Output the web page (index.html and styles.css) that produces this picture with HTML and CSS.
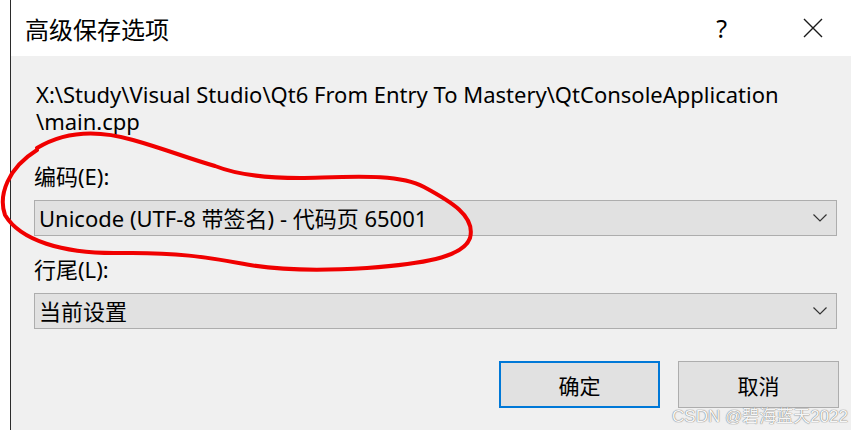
FILE: index.html
```html
<!DOCTYPE html>
<html lang="zh-CN">
<head>
    <meta charset="UTF-8">
    <meta name="viewport" content="width=device-width, initial-scale=1.0">
    <title>高级保存选项</title>
    <link rel="stylesheet" href="styles.css">
</head>
<body>
    <div class="screen">
        <div class="dialog">
            <div class="titlebar">
                <span class="title">高级保存选项</span>
                <span class="help">?</span>
                <svg class="close" width="20" height="20" viewBox="0 0 20 20">
                    <path d="M1 1 L19 19 M19 1 L1 19" stroke="#1a1a1a" stroke-width="1.4" fill="none"/>
                </svg>
            </div>

            <div class="content">
                <div class="path">
                    <div>X:\Study\Visual Studio\Qt6 From Entry To Mastery\QtConsoleApplication</div>
                    <div>\main.cpp</div>
                </div>

                <div class="label first">编码(E):</div>
                <div class="select">
                    <span>Unicode (UTF-8 带签名) - 代码页 65001</span>
                    <svg class="chevron" width="14" height="8" viewBox="0 0 14 8">
                        <path d="M0.5 0.5 L7 7 L13.5 0.5" stroke="#333" stroke-width="1.2" fill="none"/>
                    </svg>
                </div>

                <div class="label">行尾(L):</div>
                <div class="select">
                    <span>当前设置</span>
                    <svg class="chevron" width="14" height="8" viewBox="0 0 14 8">
                        <path d="M0.5 0.5 L7 7 L13.5 0.5" stroke="#333" stroke-width="1.2" fill="none"/>
                    </svg>
                </div>

                <div class="buttons">
                    <button class="btn default">确定</button>
                    <button class="btn">取消</button>
                </div>
            </div>
        </div>

        <!-- red hand drawn circle over the encoding field -->
        <svg class="scribble" width="851" height="430" viewBox="0 0 851 430">
            <path d="M37 148 C60 134 92 128 133 140 C165 149 190 159 215 166 C240 176 270 178 300 178 C350 177 398 173 424 187 C450 201 476 216 470 238 C463 258 420 264 367 268 C320 271 280 270 250 265 C210 258 180 252 120 253 C62 254 20 240 5 215 C-2 195 8 168 37 150"
                  stroke="#f00000" stroke-width="4" fill="none" stroke-linecap="round"/>
        </svg>

        <div class="watermark">CSDN @碧海蓝天2022</div>
    </div>
</body>
</html>
```

FILE: styles.css
```css
body {
    margin: 0;
    background-color: white;
    font-family: "Noto Sans", "Noto Sans CJK SC", sans-serif;
    color: #000;
}

.screen {
    position: relative;
    width: 851px;
    height: 430px;
    overflow: hidden;
    padding-left: 10px;
    box-sizing: border-box;
}

.dialog {
    height: 100%;
    border-left: 1px solid #2b2b2b;
    background-color: #f0f0f0;
}

.titlebar {
    height: 56px;
    background-color: white;
    display: flex;
    align-items: center;
    padding-left: 14px;
}

.title {
    font-size: 24px;
    flex: 1;
    font-family: "Noto Sans CJK SC", sans-serif;
}

.help {
    font-size: 25px;
    margin-right: 76px;
    font-family: "Noto Sans", sans-serif;
}

.close {
    margin-right: 28px;
}

.content {
    padding: 25px 12px 0 23px;
    font-size: 22px;
    line-height: 27px;
}

.path {
    padding-left: 2px;
}

.label {
    margin-top: 20px;
    margin-bottom: 10px;
}

.label.first {
    margin-top: 28px;
}

.select {
    height: 34px;
    margin-right: 2px;
    border: 1px solid #adadad;
    background-color: #e1e1e1;
    display: flex;
    align-items: center;
    padding-left: 4px;
    padding-right: 9px;
    line-height: 34px;
}

.select span {
    flex: 1;
}

.buttons {
    margin-top: 32px;
    display: flex;
    justify-content: flex-end;
    gap: 18px;
}

.btn {
    width: 161px;
    height: 47px;
    border: 1px solid #adadad;
    background-color: #e1e1e1;
    font-family: "Noto Sans CJK SC", sans-serif;
    font-size: 21px;
    color: #000;
    padding: 0;
}

.btn.default {
    border: 2px solid #0078d7;
}

.scribble {
    position: absolute;
    left: 0;
    top: 0;
}

.watermark {
    position: absolute;
    right: 3px;
    top: 402px;
    font-family: "Liberation Sans", "Noto Sans CJK SC", sans-serif;
    font-size: 17px;
    color: rgba(255, 255, 255, 0.95);
    text-shadow: 0 0 1px #7a7a7a, 0 0 1px #7a7a7a;
}
```
